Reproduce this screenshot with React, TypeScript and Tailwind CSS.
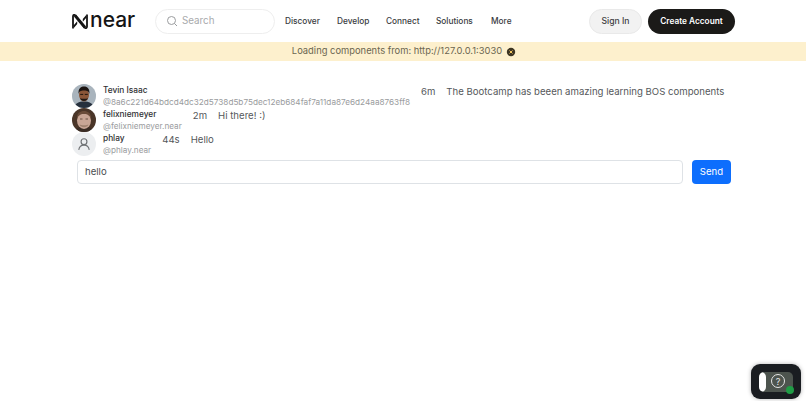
import React from "react";

function NearMark() {
  return (
    <svg width="16" height="15" viewBox="0 0 16 15" fill="none">
      <path d="M1 14.500V2.200C1 .8 2.400 .5 3.200 1.400L12.800 13.600C13.600 14.500 15 14.200 15 12.800V.5" stroke="#151515" strokeWidth="1.800" strokeLinejoin="round" />
      <path d="M1.500 11.500L5.200 7.300V10L2 13.800zM14.500 3.500L10.800 7.700V5L14 1.200z" fill="#151515" />
      <path d="M3 1.500L13 13.500" stroke="#151515" strokeWidth="2.800" />
    </svg>
  );
}

function TevinAvatar() {
  return (
    <svg viewBox="0 0 24 24" className="w-full h-full">
      <rect width="24" height="24" fill="#a9b4bd" />
      <path d="M2 24c1-5 5-6.500 10-6.500s9 1.500 10 6.500z" fill="#26303d" />
      <ellipse cx="12" cy="11" rx="5" ry="6.400" fill="#8a5638" />
      <path d="M6.600 10c-.6-6 2.800-7.500 5.400-7.500S18 4 17.400 10c-.8-2.400-1.800-3.400-5.400-3.400S7.400 7.600 6.600 10z" fill="#1c1512" />
      <path d="M8.200 10.400h3M12.800 10.400h3" stroke="#20160f" strokeWidth="1" />
      <path d="M8 14c1 4 7 4 8 0-1 .8-3 .8-4 .8s-3 0-4-.8z" fill="#1f1713" />
    </svg>
  );
}

function FelixAvatar() {
  return (
    <svg viewBox="0 0 24 24" className="w-full h-full">
      <rect width="24" height="24" fill="#4a3528" />
      <path d="M2 24c1-4 5-5 10-5s9 1 10 5z" fill="#3a2c24" />
      <ellipse cx="12" cy="12.500" rx="7" ry="8.500" fill="#c9a696" />
      <path d="M5 11c-.5-6 3.500-8 7-8s7.500 2 7 8c-1-3-3-5-7-5s-6 2-7 5z" fill="#6a4c3a" />
      <path d="M8 11h2.500M13.500 11H16" stroke="#6b5244" strokeWidth="1" />
      <path d="M7.500 16.500c1 3.500 8 3.500 9 0-2 1-7 1-9 0z" fill="#a08270" />
    </svg>
  );
}

function Row({ avatar, name, handle, time, text }: { avatar: React.ReactNode; name: string; handle: string; time: string; text: string }) {
  return (
    <div className="flex h-6 items-start">
      <div className="w-6 h-6 rounded-full overflow-hidden shrink-0 flex items-center justify-center bg-[#eceef0]">{avatar}</div>
      <div className="ml-[7px] shrink-0">
        <div className="text-[8.300px] leading-[12px] font-medium text-[#2f3033]">{name}</div>
        <div className="text-[8.200px] leading-[12px] text-[#9a9c9e]">{handle}</div>
      </div>
      <div className="ml-[11px] text-[9.600px] leading-[14px] mt-px text-[#55585b] shrink-0 flex">
        <span>{time}</span>
        <span className="ml-[11px]">{text}</span>
      </div>
    </div>
  );
}

export default function App() {
  return (
    <div className="w-[806px] h-[401px] bg-white relative overflow-hidden font-['Inter',sans-serif]">
      <header className="h-[42px] flex items-center pl-[72px] pr-[71px]">
        <div className="flex items-center gap-[2px] w-[83px]">
          <NearMark />
          <span className="text-[21px] leading-none font-medium text-[#151515] mt-[-3px]">near</span>
        </div>
        <div className="w-[120px] h-[25px] rounded-full border border-[#eeeeee] flex items-center pl-[10px] gap-[4px]">
          <svg width="12" height="12" viewBox="0 0 12 12" fill="none" stroke="#9a9c9e" strokeWidth="1">
            <circle cx="5.500" cy="5.500" r="4" />
            <path d="M8.500 8.500l2.500 2.500" />
          </svg>
          <span className="text-[9.800px] text-[#a8aaac]">Search</span>
        </div>
        <nav className="flex items-center ml-[10px] text-[8.300px] font-medium text-[#3a3c3f]">
          <span className="w-[52px]">Discover</span>
          <span className="w-[49px]">Develop</span>
          <span className="w-[50px]">Connect</span>
          <span className="w-[55px]">Solutions</span>
          <span>More</span>
        </nav>
        <div className="ml-auto flex items-center gap-[6px]">
          <div className="w-[53px] h-[25px] rounded-full bg-[#f2f2f2] border border-[#e9e9e9] flex items-center justify-center text-[8.600px] font-medium text-[#3f4144]">Sign In</div>
          <div className="w-[87px] h-[25px] rounded-full bg-[#1b1a18] flex items-center justify-center text-[8.300px] font-semibold text-white">Create Account</div>
        </div>
      </header>
      <div className="h-[19px] bg-[#fdf0cd] flex items-center justify-center gap-[4px] pl-[2px] text-[9.400px] text-[#6b6650]">
        <span>Loading components from: http://127.0.0.1:3030</span>
        <svg width="10" height="10" viewBox="0 0 10 10">
          <circle cx="5" cy="5" r="4.200" fill="#3d3523" />
          <path d="M3.500 3.500l3 3M6.500 3.500l-3 3" stroke="#f3c65f" strokeWidth="1" />
        </svg>
      </div>
      <main className="pl-[72px] pt-[23px]">
        <Row avatar={<TevinAvatar />} name="Tevin Isaac" handle="@8a6c221d64bdcd4dc32d5738d5b75dec12eb684faf7a11da87e6d24aa8763ff8" time="6m" text="The Bootcamp has beeen amazing learning BOS components" />
        <Row avatar={<FelixAvatar />} name="felixniemeyer" handle="@felixniemeyer.near" time="2m" text="Hi there! :)" />
        <Row
          avatar={
            <svg width="14" height="14" viewBox="0 0 24 24" fill="none" stroke="#6f7275" strokeWidth="2">
              <circle cx="12" cy="8" r="5" />
              <path d="M3 22c1-5.500 4.500-8 9-8s8 2.500 9 8" />
            </svg>
          }
          name="phlay"
          handle="@phlay.near"
          time="44s"
          text="Hello"
        />
        <div className="flex items-center ml-[5px] mt-[4px] gap-[9px]">
          <div className="w-[606px] h-[24px] rounded-[4px] border border-[#dee2e6] flex items-center pl-[7px] text-[9.600px] text-[#4a4d50]">hello</div>
          <div className="w-[39px] h-[24px] rounded-[4px] bg-[#0d6efd] flex items-center justify-center text-[9.600px] text-white">Send</div>
        </div>
      </main>
      <div className="absolute left-[751px] top-[364px] w-[50px] h-[35px] rounded-[9px] bg-[#1a1d21] shadow-[0_0_4px_rgba(0,0,0,0.3)] flex items-center justify-center">
        <div className="relative w-[34px] h-[20px] rounded-[5px] bg-[#4d544e] overflow-hidden">
          <div className="absolute left-0 top-0 w-[7px] h-[20px] bg-white rounded-r-[5px]" />
        </div>
        <div className="absolute left-[20px] top-[10px] w-[14px] h-[14px] rounded-full border border-[#e6e6e6] flex items-center justify-center text-[9px] leading-none text-[#e6e6e6]">?</div>
        <div className="absolute left-[35px] top-[22px] w-[8px] h-[8px] rounded-full bg-[#1f9d45]" />
      </div>
    </div>
  );
}
